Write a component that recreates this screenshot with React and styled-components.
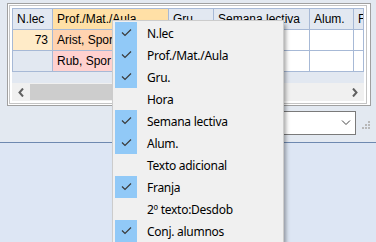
import React from 'react';
import styled, { createGlobalStyle } from 'styled-components';

const GlobalStyle = createGlobalStyle`
  html, body {
    margin: 0;
    padding: 0;
    background: #dde6f4;
  }
  body {
    font-family: "Liberation Sans", Arial, sans-serif;
    overflow: hidden;
  }
`;

const columns = [
  { key: 'nlec', title: 'N.lec', width: '40px' },
  { key: 'prof', title: 'Prof./Mat./Aula', width: '116px', head: '#ffe0a6' },
  { key: 'gru', title: 'Gru.', width: '45px' },
  { key: 'sem', title: 'Semana lectiva', width: '96px' },
  { key: 'alum', title: 'Alum.', width: '44px' },
  { key: 'f', title: 'F', width: '1fr' },
];

const rows = [
  { nlec: { text: '73', bg: '#ffebc8' }, prof: { text: 'Arist, Spor', bg: '#ffd3b0' } },
  { nlec: { text: '', bg: '#e2e8f1' }, prof: { text: 'Rub, Spor', bg: '#ffd1cf' } },
];

const menuItems = [
  { label: 'N.lec', checked: true },
  { label: 'Prof./Mat./Aula', checked: true },
  { label: 'Gru.', checked: true },
  { label: 'Hora', checked: false },
  { label: 'Semana lectiva', checked: true },
  { label: 'Alum.', checked: true },
  { label: 'Texto adicional', checked: false },
  { label: 'Franja', checked: true },
  { label: '2º texto:Desdob', checked: false },
  { label: 'Conj. alumnos', checked: true },
];

function App() {
  return (
    <Page>
      <GlobalStyle />
      <TopPane>
        <GridFrame>
          <GridInner>
            <Table $cols={columns.map(c => c.width).join(' ')}>
              {columns.map(col => (
                <HeadCell key={col.key} $bg={col.head}>
                  {col.title}
                </HeadCell>
              ))}
              {rows.map((row, i) =>
                columns.map(col => (
                  <Cell
                    key={`${i}-${col.key}`}
                    $bg={row[col.key]?.bg}
                    $right={col.key === 'nlec'}
                  >
                    {row[col.key]?.text}
                  </Cell>
                )),
              )}
            </Table>
            <EmptyArea />
            <HScroll>
              <ScrollButton>
                <svg width="6" height="9" viewBox="0 0 6 9">
                  <polyline points="5,0.5 1.5,4.5 5,8.5" fill="none" stroke="#606060" strokeWidth="2" />
                </svg>
              </ScrollButton>
              <Thumb />
              <Track />
              <ScrollButton>
                <svg width="6" height="9" viewBox="0 0 6 9">
                  <polyline points="1,0.5 4.5,4.5 1,8.5" fill="none" stroke="#606060" strokeWidth="2" />
                </svg>
              </ScrollButton>
            </HScroll>
          </GridInner>
        </GridFrame>
        <ComboRow>
          <Combo>
            <svg width="10" height="6" viewBox="0 0 10 6">
              <polyline points="1,0.5 5,4.5 9,0.5" fill="none" stroke="#444" strokeWidth="1" />
            </svg>
          </Combo>
          <Grip>
            <svg width="8" height="8" viewBox="0 0 8 8">
              <rect x="6" y="0" width="2" height="2" fill="#b8b8b8" />
              <rect x="3" y="3" width="2" height="2" fill="#b8b8b8" />
              <rect x="6" y="3" width="2" height="2" fill="#b8b8b8" />
              <rect x="0" y="6" width="2" height="2" fill="#b8b8b8" />
              <rect x="3" y="6" width="2" height="2" fill="#b8b8b8" />
              <rect x="6" y="6" width="2" height="2" fill="#b8b8b8" />
            </svg>
          </Grip>
        </ComboRow>
      </TopPane>
      <BottomPane />

      <Menu>
        {menuItems.map(item => (
          <MenuItem key={item.label}>
            <CheckBox $checked={item.checked}>
              {item.checked && (
                <svg width="22" height="22" viewBox="0 0 22 22">
                  <polyline points="7,10.5 10,13.5 16,7.5" fill="none" stroke="#3a3a3a" strokeWidth="1.2" />
                </svg>
              )}
            </CheckBox>
            <MenuLabel>{item.label}</MenuLabel>
          </MenuItem>
        ))}
      </Menu>
    </Page>
  );
}

export default App;

const Page = styled.div`
  position: relative;
  width: 376px;
  height: 242px;
  overflow: hidden;
  display: flex;
  flex-direction: column;
`;

const TopPane = styled.div`
  height: 143px;
  background: #e3e9f1;
  border-bottom: 1px solid #6e89b0;
  box-sizing: border-box;
  display: flex;
  flex-direction: column;
`;

const BottomPane = styled.div`
  flex: 1;
  background: #dde6f4;
`;

const GridFrame = styled.div`
  box-sizing: border-box;
  margin: 3px 0 0 7px;
  width: 364px;
  border: 1px solid #a0a0a0;
  padding: 1px 3px 1px 1px;
  background: #ffffff;
`;

const GridInner = styled.div`
  border: 1px solid #c4c4c4;
  padding: 2px;
  background: #ffffff;
  display: flex;
  flex-direction: column;
`;

const Table = styled.div`
  display: grid;
  grid-template-columns: ${p => p.$cols};
  grid-auto-rows: 21px;
  border-left: 1px solid #a7b9d6;
  border-top: 1px solid #a7b9d6;
  background: #e2e8f1;
  overflow: hidden;
`;

const HeadCell = styled.div`
  box-sizing: border-box;
  border-right: 1px solid #a7b9d6;
  border-bottom: 1px solid #a7b9d6;
  background: ${p => p.$bg || '#e2e8f1'};
  font-size: 12px;
  line-height: 20px;
  padding: 0 4px;
  color: #000;
  white-space: nowrap;
  overflow: hidden;
`;

const Cell = styled.div`
  box-sizing: border-box;
  border-right: 1px solid #a7b9d6;
  border-bottom: 1px solid #a7b9d6;
  background: ${p => p.$bg || '#ffffff'};
  font-size: 12px;
  line-height: 20px;
  padding: 0 4px;
  color: #000;
  white-space: nowrap;
  overflow: hidden;
  text-align: ${p => (p.$right ? 'right' : 'left')};
`;

const EmptyArea = styled.div`
  height: 11px;
  background: #e2e8f1;
`;

const HScroll = styled.div`
  height: 18px;
  display: flex;
  align-items: stretch;
  background: #f0f0f0;
`;

const ScrollButton = styled.div`
  width: 18px;
  display: flex;
  align-items: center;
  justify-content: center;
  background: #f0f0f0;
`;

const Thumb = styled.div`
  width: 170px;
  margin: 1px 0;
  background: #cdcdcd;
`;

const Track = styled.div`
  flex: 1;
  background: #f0f0f0;
`;

const ComboRow = styled.div`
  display: flex;
  align-items: flex-end;
  margin-top: 5px;
  padding-left: 150px;
`;

const Combo = styled.div`
  box-sizing: border-box;
  width: 206px;
  height: 24px;
  border: 1px solid #7a7a7a;
  background: #ffffff;
  display: flex;
  align-items: center;
  justify-content: flex-end;
  padding-right: 4px;
`;

const Grip = styled.div`
  margin: 0 0 6px 6px;
  display: flex;
`;

const Menu = styled.div`
  position: absolute;
  left: 112px;
  top: 20px;
  width: 172px;
  box-sizing: border-box;
  background: #f0f0f0;
  border: 1px solid #cccccc;
  padding: 1px 2px;
  box-shadow: 3px 3px 4px -1px rgba(0, 0, 0, 0.35);
  font-family: "Segoe UI", "Noto Sans", "Open Sans", sans-serif;
`;

const MenuItem = styled.div`
  display: flex;
  align-items: center;
  height: 22px;
`;

const CheckBox = styled.div`
  width: 22px;
  height: 22px;
  background: ${p => (p.$checked ? '#91c9f7' : 'transparent')};
  display: flex;
`;

const MenuLabel = styled.span`
  margin-left: 10px;
  font-size: 12px;
  letter-spacing: -0.27px;
  color: #000;
  white-space: nowrap;
`;
